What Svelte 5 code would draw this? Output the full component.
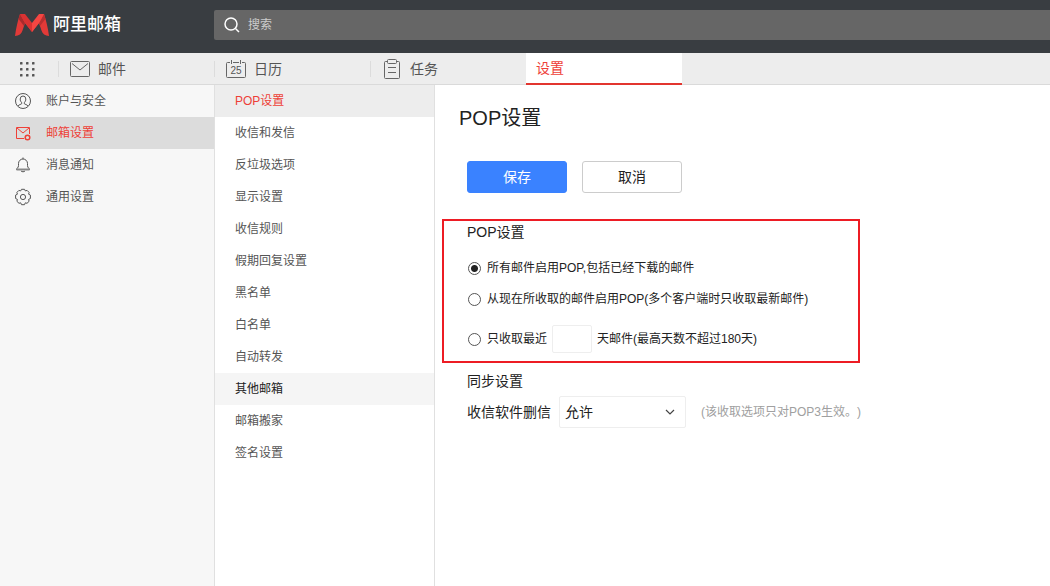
<script>
  const settingsPages = [
    'POP设置', '收信和发信', '反垃圾选项', '显示设置', '收信规则', '假期回复设置',
    '黑名单', '白名单', '自动转发', '其他邮箱', '邮箱搬家', '签名设置'
  ];
  let currentPage = $state('POP设置');
  let scope = $state('all');
  let days = $state('');
  let deletion = $state('allow');
  const dots = [0, 6, 12];
</script>

<div class="app">
  <header>
    <a class="brand" href="#home">
      <svg width="34" height="22" viewBox="0 0 34 22" aria-hidden="true">
        <path d="M5 0C3 6 1 14 0 22c4-.3 6.500-2 7.500-5.500L10 9l7 9 7-9 2.500 7.500C27.500 20 30 21.700 34 22 33 14 31 6 29 0L17 10Z" fill="#e23a38" />
        <path d="M5 0 3.600 5 9 12l1-3Z" fill="#a92b2d" />
        <path d="m29 0 1.400 5L25 12l-1-3Z" fill="#b92f30" />
        <path d="M5 0h5l7 9v9L10 9Z" fill="#d93232" />
        <path d="M29 0h-5l-7 9v9l7-9Z" fill="#f54642" />
      </svg>
      <span>阿里邮箱</span>
    </a>
    <label class="search">
      <svg width="16" height="16" viewBox="0 0 16 16" fill="none" stroke="#fff" stroke-width="1.500" aria-hidden="true">
        <circle cx="7" cy="7" r="6" /><path d="m11.500 11.500 3.500 3.500" />
      </svg>
      <input type="search" placeholder="搜索" aria-label="搜索" />
    </label>
  </header>

  <nav class="tabs" aria-label="应用">
    <button class="apps" aria-label="全部应用">
      <svg width="16" height="16" viewBox="0 0 16 16" fill="#555" aria-hidden="true">
        {#each dots as y}{#each dots as x}<rect x={x + 1} y={y + 1} width="2.500" height="2.500" rx="0.600" />{/each}{/each}
      </svg>
    </button>
    <a class="tab" href="#mail">
      <svg width="22" height="22" viewBox="0 0 22 22" fill="none" stroke="#666" aria-hidden="true">
        <rect x="1.500" y="3.500" width="19" height="15" rx="1" /><path d="m3 5.500 8 6.500 8-6.500" />
      </svg>
      邮件
    </a>
    <a class="tab" href="#calendar">
      <svg width="22" height="22" viewBox="0 0 22 22" fill="none" stroke="#666" aria-hidden="true">
        <path d="M6.500 2v4M15.500 2v4M5 4.500H2.500a1 1 0 0 0-1 1v13a1 1 0 0 0 1 1h17a1 1 0 0 0 1-1v-13a1 1 0 0 0-1-1H17M8 4.500h6" />
        <text x="11" y="15.500" text-anchor="middle" font-size="10" stroke="none" fill="#555">25</text>
      </svg>
      日历
    </a>
    <a class="tab" href="#tasks">
      <svg width="22" height="22" viewBox="0 0 22 22" fill="none" stroke="#666" aria-hidden="true">
        <path d="M7 3.500H4.500a1 1 0 0 0-1 1v15a1 1 0 0 0 1 1h13a1 1 0 0 0 1-1v-15a1 1 0 0 0-1-1H15M7 9.500h8M7 14.500h8" />
        <rect x="6.500" y="1.500" width="9" height="4" rx="1" />
      </svg>
      任务
    </a>
    <a class="tab active" href="#settings" aria-current="page">设置</a>
  </nav>

  <div class="body">
    <nav class="side" aria-label="设置分类">
      <a href="#account">
        <svg width="18" height="18" viewBox="0 0 18 18" fill="none" stroke="#555" aria-hidden="true">
          <circle cx="9" cy="9" r="7.500" />
          <path d="M7.700 10.500C6.600 9.800 6.200 8.500 6.200 7a2.800 3 0 0 1 5.600 0c0 1.500-.4 2.800-1.500 3.500v1.200c.8.800 2.700.8 3.700 2.300M7.700 10.500v1.200C6.900 12.500 5 12.500 4 14" />
        </svg>
        账户与安全
      </a>
      <a class="active" href="#mailbox" aria-current="true">
        <svg width="18" height="18" viewBox="0 0 18 18" fill="none" stroke="#ee4037" aria-hidden="true">
          <path d="M10 14.500H2.500v-11h13V10" /><path d="m3 4 6 5 6-5" />
          <circle cx="13.500" cy="13.500" r="2.300" stroke-width="1.500" />
        </svg>
        邮箱设置
      </a>
      <a href="#notice">
        <svg width="18" height="18" viewBox="0 0 18 18" fill="none" stroke="#555" aria-hidden="true">
          <path d="M2.500 13.500c0-1.200 2-1.500 2-4V7.500a4.500 4.500 0 0 1 9 0v2c0 2.500 2 2.800 2 4ZM9 3V1.500" />
          <path d="M2.500 13.500h13" stroke="#888" stroke-width="2" />
          <path d="M7 15c.7 1 3.300 1 4 0" />
        </svg>
        消息通知
      </a>
      <a href="#general">
        <svg width="18" height="18" viewBox="0 0 18 18" fill="none" stroke="#555" stroke-linejoin="round" aria-hidden="true">
          <path d="M7.500 1.300h3l.8 1.600 1.800-.5 2 2-.5 1.800 1.800.9v3.400l-1.800.9.500 1.900-2.100 2-1.700-.5-.8 1.900h-3l-.8-1.900-1.700.5-2.100-2 .5-1.900-1.800-.9V7.100l1.800-.9-.5-1.800 2-2 1.800.5Z" />
          <circle cx="9" cy="9" r="2.600" />
        </svg>
        通用设置
      </a>
    </nav>

    <nav class="pages" aria-label="邮箱设置">
      {#each settingsPages as page}
        <a
          href={'#' + page}
          class:active={page === currentPage}
          class:hover={page === '其他邮箱'}
          onclick={() => (currentPage = page)}>{page}</a>
      {/each}
    </nav>

    <main>
      <h1>POP设置</h1>
      <div class="actions">
        <button class="primary">保存</button>
        <button>取消</button>
      </div>

      <section class="pop" role="radiogroup" aria-labelledby="pop-title">
        <h2 id="pop-title">POP设置</h2>
        <label class="option">
          <input type="radio" name="scope" value="all" bind:group={scope} />
          所有邮件启用POP,包括已经下载的邮件
        </label>
        <label class="option">
          <input type="radio" name="scope" value="new" bind:group={scope} />
          从现在所收取的邮件启用POP(多个客户端时只收取最新邮件)
        </label>
        <div class="recent">
          <label class="option">
            <input type="radio" name="scope" value="recent" bind:group={scope} />
            只收取最近
          </label>
          <input class="days" id="days" type="text" aria-label="天数" bind:value={days} />
          <label for="days">天邮件(最高天数不超过180天)</label>
        </div>
      </section>

      <section class="sync">
        <h2>同步设置</h2>
        <div class="field">
          <label for="deletion">收信软件删信</label>
          <span class="select">
            <select id="deletion" bind:value={deletion}>
              <option value="allow">允许</option>
              <option value="deny">禁止</option>
            </select>
            <svg width="10" height="6" viewBox="0 0 10 6" fill="none" stroke="#444" stroke-width="1.200" aria-hidden="true"><path d="m1 1 4 4 4-4" /></svg>
          </span>
          <small>(该收取选项只对POP3生效。)</small>
        </div>
      </section>
    </main>
  </div>
</div>

<style>
  :global(body) { margin: 0; }
  .app {
    display: flex;
    flex-direction: column;
    min-height: 100vh;
    background: #fff;
    color: #222;
    font: 12px/16px "Liberation Sans", "Noto Sans CJK SC", sans-serif;
    text-spacing-trim: space-all;
  }
  .app :where(*) { box-sizing: border-box; }
  a { color: inherit; text-decoration: none; }
  button, input, select { font: inherit; color: inherit; }
  svg { flex: none; display: block; }
  h1, h2 { margin: 0; font-weight: 400; }

  header { display: flex; align-items: center; height: 53px; background: #393d41; }
  .brand {
    display: flex;
    align-items: center;
    gap: 4px;
    width: 214px;
    padding: 0 0 4px 15px;
    color: #fff;
    font-size: 17px;
    font-weight: 500;
    line-height: 24px;
  }
  .search {
    flex: 1;
    display: flex;
    align-items: center;
    gap: 8px;
    height: 30px;
    margin-bottom: 3px;
    padding-left: 10px;
    border-radius: 2px 0 0 2px;
    background: #666;
  }
  .search input { flex: 1; min-width: 0; padding: 0; border: 0; outline: 0; background: none; color: #fff; }
  .search input::placeholder { color: #ccc; opacity: 1; }

  .tabs { display: flex; height: 32px; border-bottom: 1px solid #dadada; background: #ededed; }
  .apps { width: 58px; padding: 0 0 0 19px; border: 0; background: none; }
  .tab {
    display: flex;
    align-items: center;
    gap: 7px;
    width: 156px;
    padding-left: 11px;
    color: #555;
    font-size: 14px;
    background: linear-gradient(#dcdcdc, #dcdcdc) left center / 1px 16px no-repeat;
  }
  .tab.active { height: 32px; padding-left: 10px; border-bottom: 2px solid #e2352f; background: #fff; color: #ee4037; }

  .body { flex: 1; display: flex; }
  .side, .pages { flex: none; border-right: 1px solid #e0e0e0; }
  .side { width: 215px; background: #f7f7f7; }
  .pages { width: 220px; }
  .side a, .pages a { display: flex; align-items: center; height: 32px; color: #555; }
  .side a { gap: 14px; padding-left: 14px; }
  .side a.active { background: #dcdcdc; color: #ee4037; }
  .pages a { padding-left: 20px; }
  .pages a.hover { background: #f5f5f5; color: #222; }
  .pages a.active { background: #ededed; color: #ee4037; }

  main { flex: 1; min-width: 0; padding: 19px 7px; }
  h1 { padding-left: 17px; font-size: 20px; line-height: 28px; }
  h2 { font-size: 14px; line-height: 20px; }
  .actions { display: flex; gap: 15px; margin: 29px 0 26px; padding-left: 25px; }
  .actions button {
    width: 100px;
    height: 32px;
    padding: 0;
    border: 1px solid #ccc;
    border-radius: 3px;
    background: #fff;
    font-size: 14px;
  }
  .actions .primary { border-color: #3a82ff; background: #3a82ff; color: #fff; }

  .pop { max-width: 418px; padding: 1px 0 8px 23px; border: 2px solid #ed1c24; }
  .option { display: flex; align-items: center; gap: 6px; }
  .pop > .option { margin-top: 15px; }
  .pop > h2 + .option { margin-top: 18px; }
  .option input {
    appearance: none;
    flex: none;
    width: 13px;
    height: 13px;
    margin: 1px 0 0 1px;
    border: 1px solid #555;
    border-radius: 50%;
    background: #fff;
  }
  .option input:checked { background: radial-gradient(circle, #222 3px, #fff 4px); }
  .recent { display: flex; align-items: center; gap: 5px; margin-top: 18px; }
  .days { width: 40px; height: 28px; padding: 0 4px; border: 1px solid #eee; border-radius: 2px; }

  .sync { margin-top: 8px; padding-left: 25px; }
  .field { display: flex; align-items: center; margin-top: 5px; font-size: 14px; }
  .select { position: relative; margin: 0 15px 0 8px; }
  .select select {
    appearance: none;
    display: block;
    width: 127px;
    height: 32px;
    padding: 0 24px 0 5px;
    border: 1px solid #eee;
    border-radius: 2px;
    background: #fff;
  }
  .select svg { position: absolute; top: 13px; right: 11px; pointer-events: none; }
  small { color: #a0a0a0; font-size: 12px; }
</style>
